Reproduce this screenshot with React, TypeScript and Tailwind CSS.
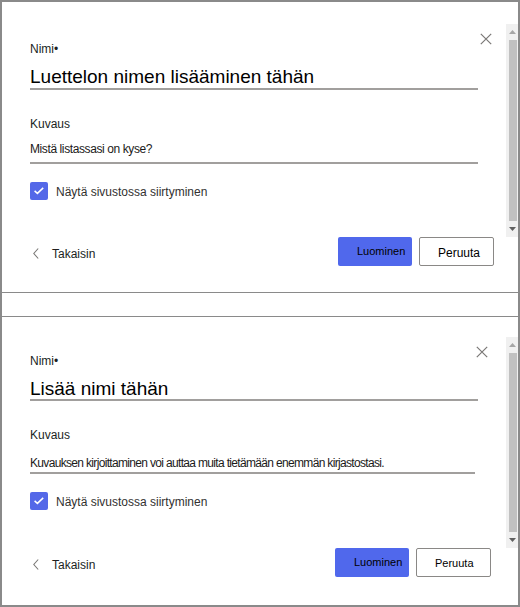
import * as React from "react"

type PanelProps = {
  className: string
  title: string
  description: string
  pad: string
  titleClass: string
  kuvausClass: string
  descClass: string
  checkClass: string
  footerClass: string
  closeClass: string
  scrollClass: string
  peruutaText: string
}

function CloseIcon() {
  return (
    <svg width="12" height="12" viewBox="0 0 12 12" fill="none">
      <path d="M0.8 0.8 L11.2 11.2 M11.2 0.8 L0.8 11.2" stroke="#7a7876" strokeWidth="1.2" />
    </svg>
  )
}

function ChevronLeft() {
  return (
    <svg width="6" height="11" viewBox="0 0 6 11" fill="none">
      <path d="M5.2 0.5 L0.8 5.5 L5.2 10.5" stroke="#7a7876" strokeWidth="1.1" />
    </svg>
  )
}

function Scrollbar({ className }: { className: string }) {
  return (
    <div className={`absolute right-0 flex w-[12px] flex-col bg-[#f0f0f0] ${className}`}>
      <div className="flex h-[16px] items-center justify-center">
        <svg width="7" height="4" viewBox="0 0 7 4">
          <path d="M0 4 L3.5 0 L7 4 Z" fill="#a6a6a6" />
        </svg>
      </div>
      <div className="ml-[3px] w-[8px] flex-1 bg-[#c1c1c1]" />
      <div className="flex h-[16px] items-center justify-center">
        <svg width="7" height="4" viewBox="0 0 7 4">
          <path d="M0 0 L7 0 L3.5 4 Z" fill="#606060" />
        </svg>
      </div>
    </div>
  )
}

function Panel(p: PanelProps) {
  return (
    <div className={`relative flex flex-col pl-[28px] ${p.className} ${p.pad}`}>
      <button className={`absolute ${p.closeClass}`}>
        <CloseIcon />
      </button>
      <Scrollbar className={p.scrollClass} />

      <label className="text-[12px] leading-[16px] text-[#201f1e]">Nimi•</label>
      <div className={`border-b-2 border-[#a19f9d] text-[19px] text-black ${p.titleClass}`}>
        {p.title}
      </div>

      <label className={`text-[12px] leading-[16px] text-[#201f1e] ${p.kuvausClass}`}>Kuvaus</label>
      <div className={`border-b-2 border-[#a19f9d] text-[12px] leading-[16px] text-[#1b1a19] ${p.descClass}`}>
        {p.description}
      </div>

      <div className={`flex items-center gap-[8px] ${p.checkClass}`}>
        <div className="flex size-[18px] items-center justify-center rounded-[2px] bg-[#5468e8]">
          <svg width="18" height="18" viewBox="0 0 18 18" fill="none">
            <path d="M4.6 8.9 L7.4 11.4 L13.2 5.9" stroke="white" strokeWidth="1.5" />
          </svg>
        </div>
        <span className="pt-[2px] text-[12px] leading-[16px] text-[#323130]">Näytä sivustossa siirtyminen</span>
      </div>

      <div className={`flex items-center justify-between ${p.footerClass}`}>
        <button className="ml-[3px] flex items-center gap-[13px] pt-[4px] text-[12px] text-[#201f1e]">
          <ChevronLeft />
          <span>Takaisin</span>
        </button>
        <div className="flex gap-[7px]">
          <button className="flex h-[29px] w-[74px] items-center rounded-[2px] bg-[#5068ec] pl-[19px] text-[11px] text-black">
            Luominen
          </button>
          <button className={`flex h-[29px] w-[75px] items-center rounded-[2px] border border-[#8a8886] bg-white pl-[18px] pt-[2px] text-black ${p.peruutaText}`}>
            Peruuta
          </button>
        </div>
      </div>
    </div>
  )
}

export default function App() {
  return (
    <div className="flex h-[607px] w-[520px] flex-col border-2 border-[#8a8a8a] bg-white font-['Liberation_Sans',Arial,sans-serif]">
      <Panel
        className="h-[291px] border-b border-[#8a8a8a]"
        pad="pt-[39px] pr-[24px]"
        title="Luettelon nimen lisääminen tähän"
        description="Mistä listassasi on kyse?"
        titleClass="mt-[9px] w-[448px] leading-[22px]"
        kuvausClass="mt-[26px]"
        descClass="mt-[9px] w-[448px] pb-[5px] tracking-[-0.4px]"
        checkClass="mt-[18px]"
        footerClass="mt-[37px]"
        closeClass="top-[31px] right-[26px]"
        scrollClass="top-[22px] h-[213px]"
        peruutaText="text-[12px]"
      />
      <div className="h-[23px]" />
      <Panel
        className="flex-1 border-t border-[#8a8a8a]"
        pad="pt-[36px] pr-[27px]"
        title="Lisää nimi tähän"
        description="Kuvauksen kirjoittaminen voi auttaa muita tietämään enemmän kirjastostasi."
        titleClass="mt-[10px] w-[448px] leading-[20px]"
        kuvausClass="mt-[26px]"
        descClass="mt-[12px] w-[445px] pb-[1px] tracking-[-0.67px]"
        checkClass="mt-[18px]"
        footerClass="mt-[38px]"
        closeClass="top-[29px] right-[30px]"
        scrollClass="top-[20px] h-[211px]"
        peruutaText="text-[11px]"
      />
    </div>
  )
}
